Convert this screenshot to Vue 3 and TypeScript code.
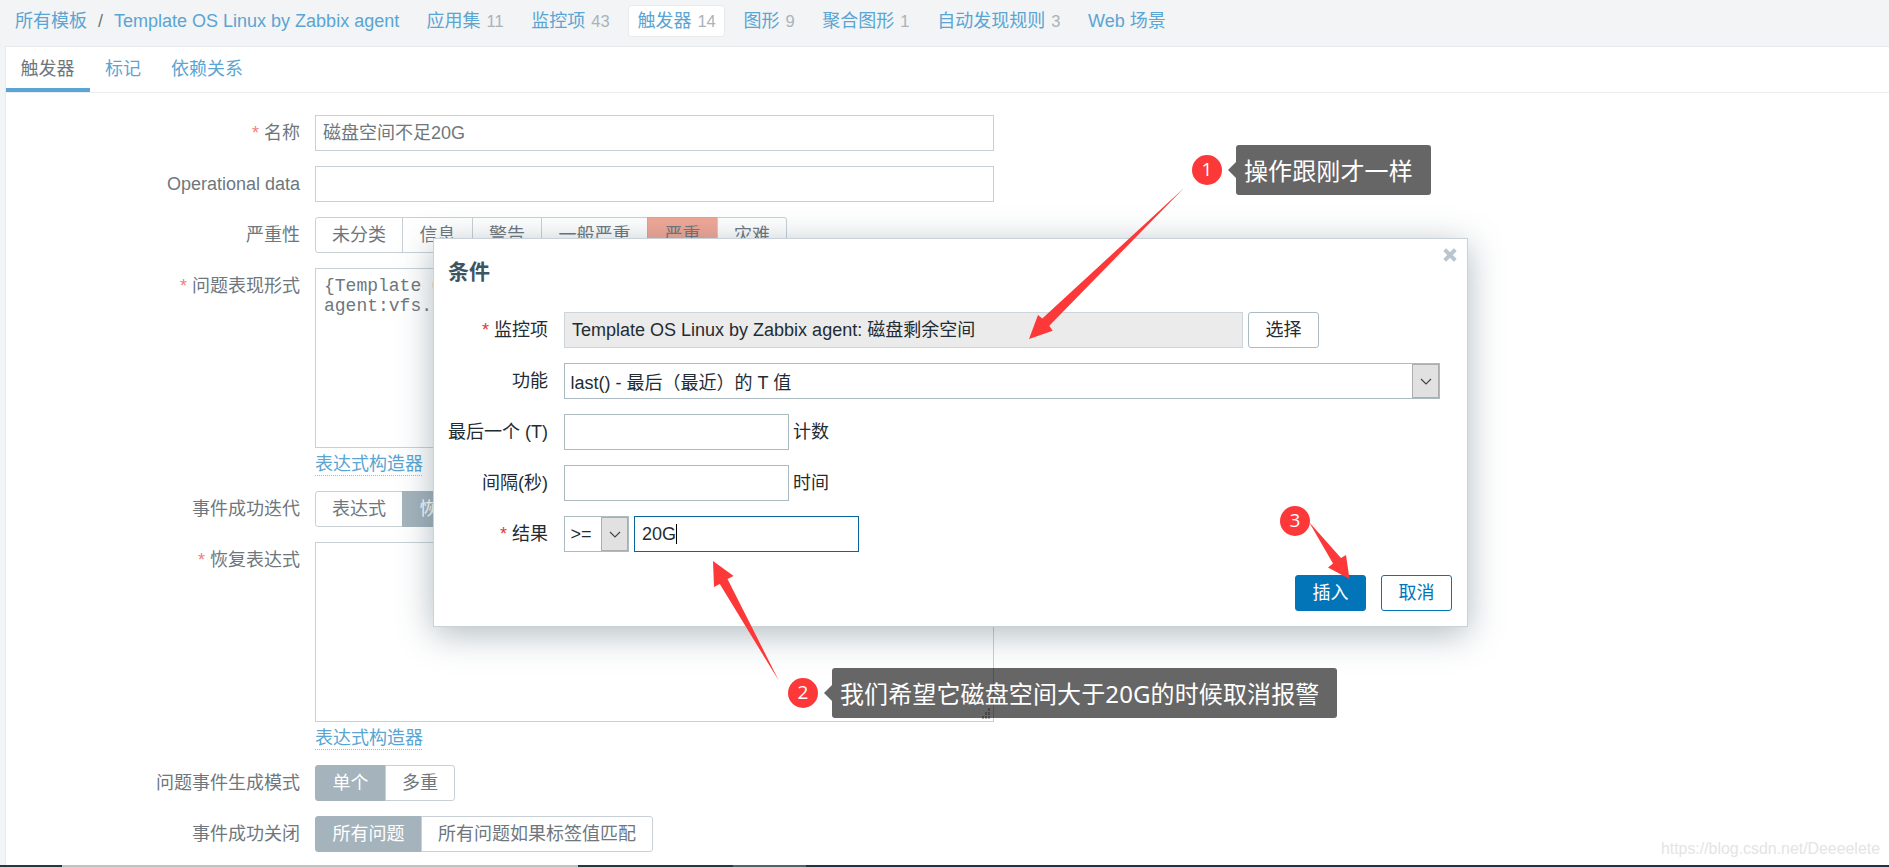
<script setup lang="ts">
interface NavItem { label: string; count?: number; active?: boolean }
interface Segment { label: string; width: number; kind?: 'on' | 'high' }

const nav: NavItem[] = [
  { label: '应用集', count: 11 },
  { label: '监控项', count: 43 },
  { label: '触发器', count: 14, active: true },
  { label: '图形', count: 9 },
  { label: '聚合图形', count: 1 },
  { label: '自动发现规则', count: 3 },
  { label: 'Web 场景' },
]
const tabs = ['触发器', '标记', '依赖关系']
const severities: Segment[] = [
  { label: '未分类', width: 88 },
  { label: '信息', width: 71 },
  { label: '警告', width: 70 },
  { label: '一般严重', width: 107 },
  { label: '严重', width: 71, kind: 'high' },
  { label: '灾难', width: 70 },
]
const recovery: Segment[] = [
  { label: '表达式', width: 88 },
  { label: '恢复表达式', width: 125, kind: 'on' },
  { label: '无', width: 53 },
]
const generation: Segment[] = [
  { label: '单个', width: 71, kind: 'on' },
  { label: '多重', width: 70 },
]
const closing: Segment[] = [
  { label: '所有问题', width: 107, kind: 'on' },
  { label: '所有问题如果标签值匹配', width: 232 },
]
const expression = '{Template O\nagent:vfs.'
</script>

<template>
  <div class="page">
    <header class="top">
      <a class="link">所有模板</a>
      <span class="slash">/</span>
      <a class="link template">Template OS Linux by Zabbix agent</a>
      <nav class="nav">
        <span v-for="n in nav" :key="n.label" class="nav-item" :class="{ active: n.active }">
          <a class="link">{{ n.label }}</a><sup v-if="n.count" class="count">{{ n.count }}</sup>
        </span>
      </nav>
    </header>

    <main class="panel">
      <div class="tabs">
        <a v-for="(t, i) in tabs" :key="t" class="tab" :class="{ current: i === 0 }">{{ t }}</a>
      </div>
      <div class="form">
        <div class="row">
          <label class="req">名称</label>
          <div class="input wide">磁盘空间不足20G</div>
        </div>
        <div class="row">
          <label>Operational data</label>
          <div class="input wide"></div>
        </div>
        <div class="row">
          <label>严重性</label>
          <div class="segments">
            <span v-for="s in severities" :key="s.label" class="seg" :class="s.kind" :style="{ width: s.width + 'px' }">{{ s.label }}</span>
          </div>
        </div>
        <div class="row">
          <label class="req">问题表现形式</label>
          <div>
            <div class="textarea">{{ expression }}</div>
            <a class="link dotted">表达式构造器</a>
          </div>
        </div>
        <div class="row">
          <label>事件成功迭代</label>
          <div class="segments">
            <span v-for="s in recovery" :key="s.label" class="seg" :class="s.kind" :style="{ width: s.width + 'px' }">{{ s.label }}</span>
          </div>
        </div>
        <div class="row">
          <label class="req">恢复表达式</label>
          <div>
            <div class="textarea">
              <svg class="grip" width="9" height="11" viewBox="0 0 9 11" fill="#b4b4b4">
                <path d="M6 0h2v3h-2zM3 4h2v3h-2zM6 4h2v3h-2zM0 8h2v3h-2zM3 8h2v3h-2zM6 8h2v3h-2z" />
              </svg>
            </div>
            <a class="link dotted">表达式构造器</a>
          </div>
        </div>
        <div class="row">
          <label>问题事件生成模式</label>
          <div class="segments">
            <span v-for="s in generation" :key="s.label" class="seg" :class="s.kind" :style="{ width: s.width + 'px' }">{{ s.label }}</span>
          </div>
        </div>
        <div class="row">
          <label>事件成功关闭</label>
          <div class="segments">
            <span v-for="s in closing" :key="s.label" class="seg" :class="s.kind" :style="{ width: s.width + 'px' }">{{ s.label }}</span>
          </div>
        </div>
      </div>
    </main>

    <section class="modal">
      <svg class="close" width="14" height="14" viewBox="0 0 14 14" stroke="#b9c6cd" stroke-width="4">
        <path d="M1.7 1.7L12.3 12.3M12.3 1.7L1.7 12.3" />
      </svg>
      <h4>条件</h4>
      <div class="fields">
        <div class="row">
          <label class="req">监控项</label>
          <div class="input wide readonly">Template OS Linux by Zabbix agent: 磁盘剩余空间</div>
          <button class="btn plain">选择</button>
        </div>
        <div class="row">
          <label>功能</label>
          <div class="select function">
            <span>last() - 最后（最近）的 T 值</span>
            <i class="drop"><svg width="12" height="7" viewBox="0 0 12 7"><path d="M1 1l5 5 5-5" /></svg></i>
          </div>
        </div>
        <div class="row">
          <label>最后一个 (T)</label>
          <div class="input small"></div>
          <span class="unit">计数</span>
        </div>
        <div class="row">
          <label>间隔(秒)</label>
          <div class="input small"></div>
          <span class="unit">时间</span>
        </div>
        <div class="row">
          <label class="req">结果</label>
          <div class="select operator">
            <span>&gt;=</span>
            <i class="drop"><svg width="12" height="7" viewBox="0 0 12 7"><path d="M1 1l5 5 5-5" /></svg></i>
          </div>
          <div class="input small focus">20G<i class="caret"></i></div>
        </div>
      </div>
      <div class="actions">
        <button class="btn primary">插入</button>
        <button class="btn outline">取消</button>
      </div>
    </section>

    <svg class="arrows" width="1889" height="867" viewBox="0 0 1889 867" fill="#fc3838">
      <path d="M1184 188L1049.3 325.7L1052.7 330.7L1029 339L1038 315L1042.3 318.5Z" />
      <path d="M779 681L727.5 579L733.6 576L713 561L714 587L719.8 584Z" />
      <path d="M1309 522L1341 558L1346 555L1349.5 579L1328 567.5L1333 563.5Z" />
    </svg>
    <span class="badge b1">1</span>
    <span class="badge b2">2</span>
    <span class="badge b3">3</span>
    <div class="note n1">操作跟刚才一样</div>
    <div class="note n2">我们希望它磁盘空间大于20G的时候取消报警</div>
    <div class="watermark">https://blog.csdn.net/Deeeelete</div>
    <div class="strip"><i class="s1"></i><i class="s2"></i><i class="s3"></i><i class="s4"></i><i class="s5"></i></div>
  </div>
</template>

<style>
body { margin: 0; overflow: hidden; }
</style>

<style scoped>
* { box-sizing: border-box; }
.page {
  position: relative;
  width: 1889px;
  height: 867px;
  overflow: hidden;
  background: #f2f4f5;
  color: #6e777d;
  font: 18px/36px "Liberation Sans", "Noto Sans CJK SC", sans-serif;
  white-space: nowrap;
}
.link { color: #5aa5d3; }
.top { display: flex; align-items: center; height: 46px; padding: 0 0 5px 15px; }
.slash { margin: 0 11px; }
.template { width: 286px; }
.nav { display: flex; margin-left: 17px; gap: 8.7px; }
.nav-item { display: flex; align-items: center; height: 32px; padding: 0 8.5px; border: 1px solid transparent; border-radius: 3px; }
.nav-item.active { background: #fff; border-color: #e8ebed; }
.count { margin-left: 6px; font-size: 16.5px; line-height: 30px; vertical-align: baseline; color: #a9b3b9; }
.panel { height: 821px; margin-left: 5px; background: #fff; border: 1px solid #e8ebed; border-width: 1px 0 0 1px; }
.tabs { display: flex; height: 46px; border-bottom: 1px solid #ebeef0; }
.tab { height: 45px; padding: 0 15px; line-height: 44px; color: #5aa5d3; }
.tab.current { padding: 0 15.5px 0 14.5px; color: #6e777d; border-bottom: 4px solid #5aa5d3; }
.form { padding-top: 22px; }
.row { display: flex; margin-bottom: 15px; line-height: 36px; }
.form label { width: 294px; margin-right: 15px; text-align: right; }
.req::before { content: "*"; margin-right: 5px; color: #f0807c; }
.input { height: 36px; padding: 0 7px; line-height: 34px; background: #fff; border: 1px solid #c8d0d5; }
.wide { width: 679px; }
.segments { display: flex; }
.seg { height: 36px; line-height: 34px; text-align: center; border: 1px solid #c8d0d5; }
.seg + .seg { margin-left: -1px; }
.seg:first-child { border-radius: 3px 0 0 3px; }
.seg:last-child { border-radius: 0 3px 3px 0; }
.seg.on { background: #a4b3bc; border-color: #a4b3bc; color: #fff; }
.seg.high { background: #f0a796; border-color: #e0a294; }
.textarea {
  position: relative;
  width: 679px;
  height: 180px;
  padding: 7px 8px;
  border: 1px solid #c8d0d5;
  font: 18px/20px "Liberation Mono", monospace;
  white-space: pre-wrap;
}
.grip { position: absolute; right: 2px; bottom: 2px; }
.dotted { display: block; width: 107px; height: 28px; line-height: 33px; border-bottom: 1px dotted #8fc0df; }

.modal {
  position: absolute;
  left: 433px;
  top: 238px;
  width: 1035px;
  height: 389px;
  color: #1f2c33;
  background: #fff;
  border: 1px solid #c8d2d8;
  box-shadow: 0 7px 33px rgba(60, 85, 99, .4);
}
.close { position: absolute; right: 10px; top: 9px; }
h4 { margin: 17px 0 0 14px; font-size: 21px; line-height: 31px; color: #3c5563; }
.fields { margin-top: 25px; }
.fields label { width: 114px; margin-right: 16px; text-align: right; }
.modal .req::before { color: #e33734; }
.modal .input { border-color: #acbbc2; }
.modal .readonly { background: #ebebeb; border-color: #ccd5d9; }
.small { width: 225px; }
.modal .focus { margin-left: 5px; border-color: #0a649c; }
.caret { display: inline-block; width: 1px; height: 20px; vertical-align: -4px; background: #000; }
.unit { margin-left: 4px; }
.btn { width: 71px; height: 36px; padding: 0; font: inherit; line-height: 35px; border: 1px solid #acbbc2; border-radius: 3px; background: #fff; color: #1f2c33; }
.plain { margin-left: 5px; }
.primary { background: #0275b8; border-color: #0275b8; color: #fff; }
.outline { border-color: #0275b8; color: #0275b8; }
.select { display: flex; justify-content: space-between; height: 36px; padding-left: 5.5px; line-height: 38px; border: 1px solid #acbbc2; }
.function { width: 876px; }
.operator { width: 65px; line-height: 34px; }
.drop { display: flex; align-items: center; justify-content: center; width: 27px; background: #e1e1e1; border: 1px solid #adadad; }
.drop path { fill: none; stroke: #444; stroke-width: 1.2; }
.actions { display: flex; gap: 15px; justify-content: flex-end; margin: 23px 15px 0 0; }

.arrows { position: absolute; left: 0; top: 0; }
.badge {
  position: absolute;
  width: 30px;
  height: 30px;
  border-radius: 50%;
  background: #fc3838;
  color: #fff;
  font: 19px/29px "Open Sans", "Noto Sans", sans-serif;
  text-align: center;
}
.b1 { left: 1192px; top: 155px; }
.b2 { left: 788px; top: 678px; }
.b3 { left: 1280px; top: 506px; }
.note {
  position: absolute;
  height: 50px;
  padding-left: 8px;
  border-radius: 3px;
  background: rgba(0, 0, 0, .6);
  color: #fff;
  font: 24px/51px "Noto Sans", "Noto Sans CJK SC", sans-serif;
  letter-spacing: .12px;
}
.note::before {
  content: "";
  position: absolute;
  left: -8px;
  top: 17px;
  border: solid transparent;
  border-width: 8px 8px 8px 0;
  border-right-color: rgba(0, 0, 0, .6);
}
.n1 { left: 1236px; top: 145px; width: 195px; }
.n2 { left: 832px; top: 668px; width: 505px; }
.watermark { position: absolute; right: 9px; top: 839px; font-size: 15.9px; line-height: 20px; color: #e4e4e4; }
.strip { position: absolute; left: 0; bottom: 0; display: flex; width: 100%; height: 2px; }
.s1 { width: 62px; background: #1f3a44; }
.s2 { width: 516px; background: #bfc3c1; }
.s3 { width: 155px; background: #1f3a44; }
.s4 { width: 73px; background: #4e646c; }
.s5 { flex: 1; background: #1f3344; }
</style>
